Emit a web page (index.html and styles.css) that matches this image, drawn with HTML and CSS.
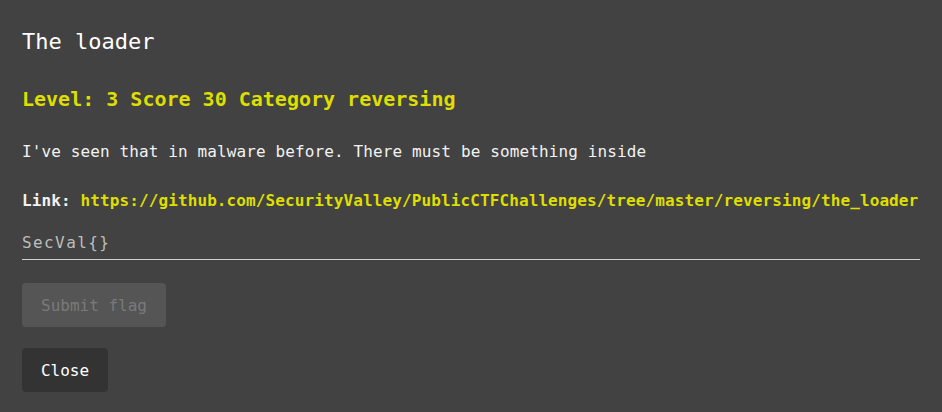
FILE: index.html
```html
<!DOCTYPE html>
<html>
<head>
<meta charset="utf-8">
<link rel="stylesheet" href="styles.css">
</head>
<body>
<div class="dialog">
  <h2 class="title">The loader</h2>
  <h3 class="meta">Level: 3 Score 30 Category reversing</h3>
  <p class="desc">I've seen that in malware before. There must be something inside</p>
  <p class="link"><b>Link:</b> <a href="#">https://github.com/SecurityValley/PublicCTFChallenges/tree/master/reversing/the_loader</a></p>
  <div class="field"><input class="flag" type="text" placeholder="SecVal{}"></div>
  <div class="actions">
    <button class="btn submit" disabled>Submit flag</button>
    <button class="btn close">Close</button>
  </div>
</div>
</body>
</html>
```
FILE: styles.css
```css
html, body {
  margin: 0;
  padding: 0;
  background: #424242;
}
body {
  font-family: "DejaVu Sans Mono", "Liberation Mono", monospace;
  color: #f2f2f2;
}
.dialog {
  padding: 28px 22px 20px 22px;
  display: flex;
  flex-direction: column;
}
.title {
  margin: 0;
  font-size: 22px;
  font-weight: normal;
  line-height: 28px;
  color: #ffffff;
}
.meta {
  margin: 30px 0 0 0;
  font-size: 20px;
  font-weight: bold;
  line-height: 26px;
  color: #dede00;
}
.desc {
  margin: 29px 0 0 0;
  font-size: 16px;
  line-height: 22px;
  letter-spacing: 0.12px;
}
.link {
  margin: 27px 0 0 0;
  font-size: 16px;
  line-height: 22px;
  font-weight: bold;
  white-space: nowrap;
  letter-spacing: 0.11px;
}
.link a {
  color: #dede00;
  text-decoration: none;
}
.field {
  margin-top: 17px;
  width: 898px;
  border-bottom: 1px solid #d0d0d0;
}
.flag {
  display: block;
  width: 100%;
  box-sizing: content-box;
  background: transparent;
  border: none;
  outline: none;
  padding: 0 0 4px 0;
  height: 26px;
  font-family: "DejaVu Sans Mono", "Liberation Mono", monospace;
  font-size: 16px;
  letter-spacing: 1.4px;
  color: #cfcfcf;
}
.flag::placeholder {
  color: #bdbdbd;
}
.actions {
  margin-top: 23px;
  display: flex;
  flex-direction: column;
  align-items: flex-start;
  gap: 21px;
}
.btn {
  height: 44px;
  border: none;
  border-radius: 4px;
  font-family: "DejaVu Sans Mono", "Liberation Mono", monospace;
  font-size: 16px;
  padding: 0;
  white-space: nowrap;
  text-align: center;
}
.submit {
  background: #555555;
  color: #7a7a7a;
  width: 144px;
}
.close {
  background: #333333;
  color: #ffffff;
  width: 86px;
}
```
